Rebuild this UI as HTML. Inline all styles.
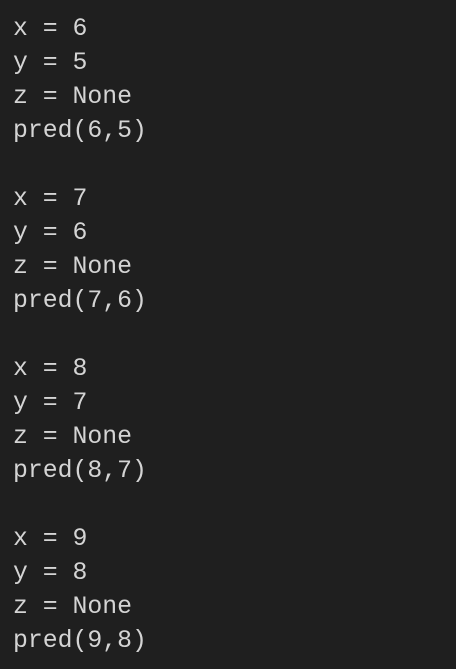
<!DOCTYPE html>
<html><head><meta charset="utf-8"><style>
html,body{margin:0;padding:0;background:#1f1f1f;width:456px;height:669px;overflow:hidden}
pre{margin:0;position:absolute;left:13px;top:12px;font-family:"Liberation Mono","DejaVu Sans Mono",monospace;font-size:24.8px;line-height:34px;color:#d4d4d4}
</style></head><body><pre>x = 6
y = 5
z = None
pred(6,5)

x = 7
y = 6
z = None
pred(7,6)

x = 8
y = 7
z = None
pred(8,7)

x = 9
y = 8
z = None
pred(9,8)</pre></body></html>
